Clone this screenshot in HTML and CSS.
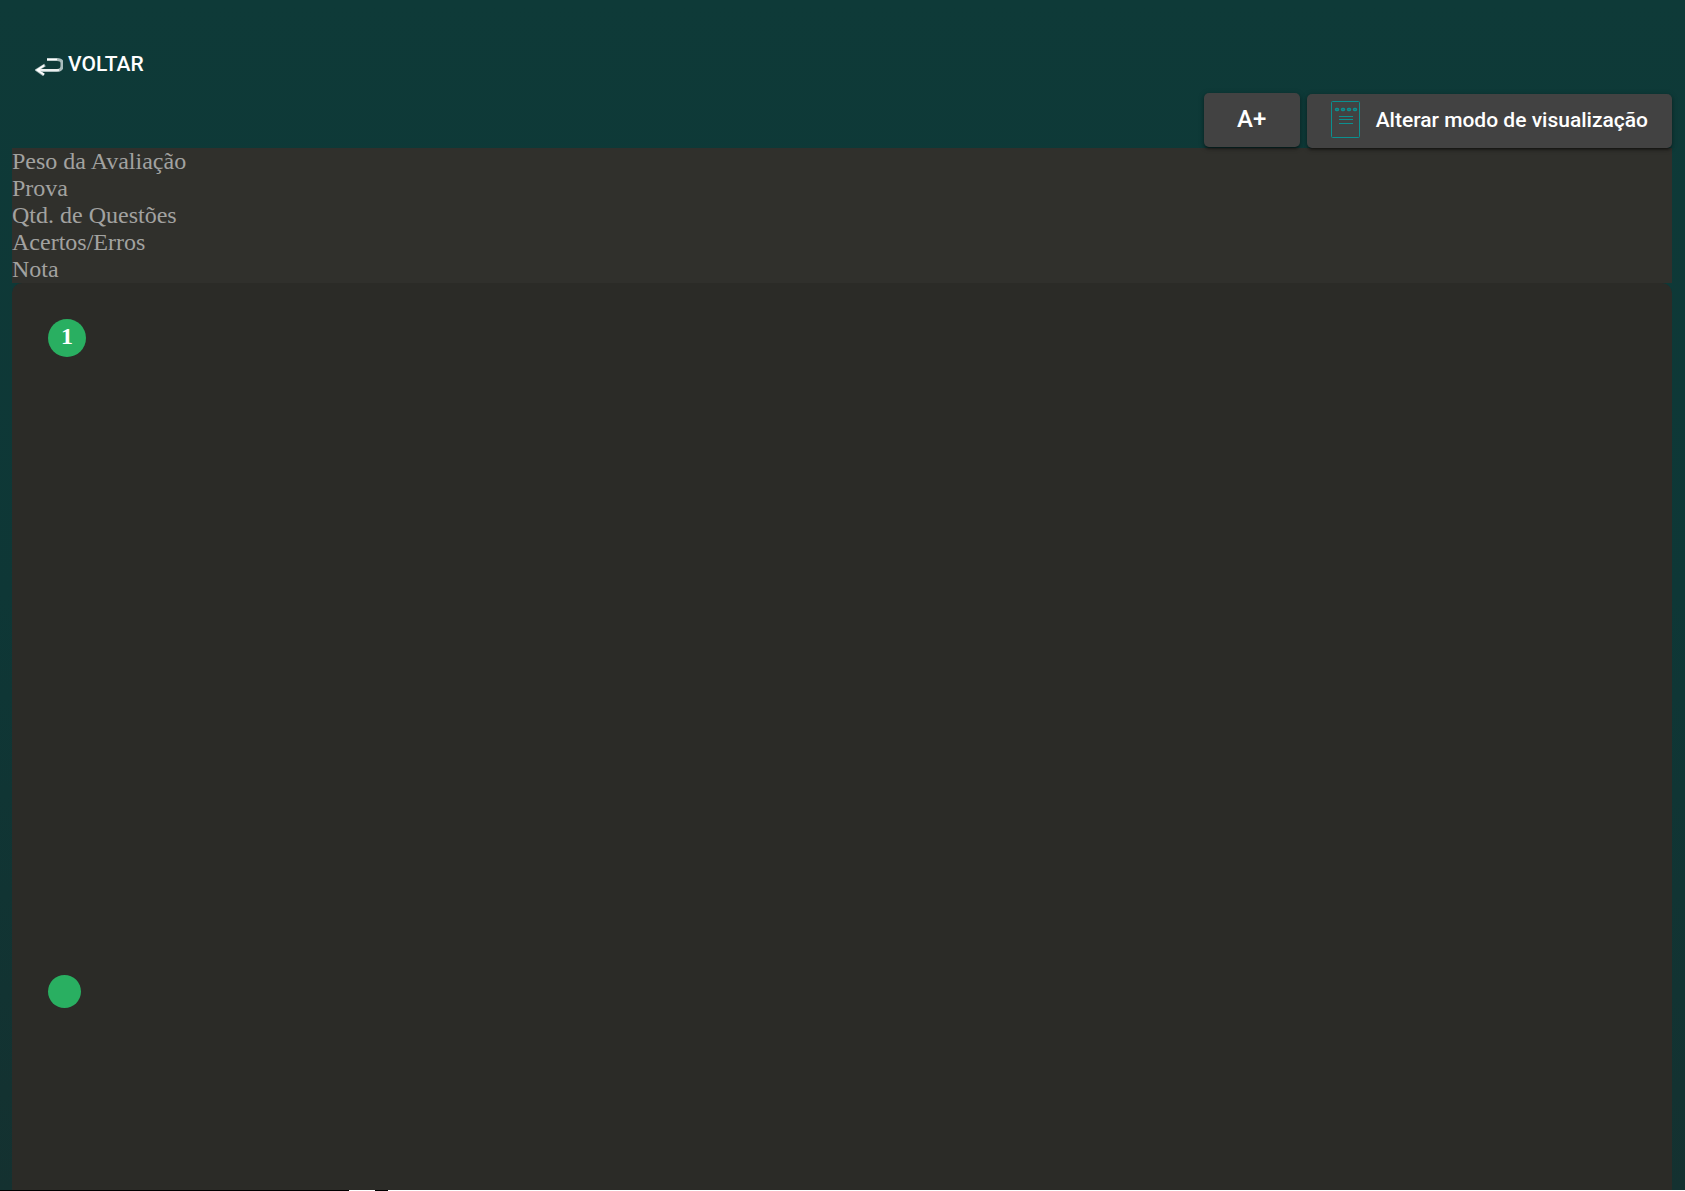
FILE: index.html
```html
<!DOCTYPE html>
<html lang="pt-BR">
<head>
<meta charset="utf-8">
<title>Avaliação</title>
<link rel="stylesheet" href="styles.css">
</head>
<body>
<header class="topbar">
  <button type="button" class="back">
    <svg class="back-icon" viewBox="0 0 28 18" width="28" height="18" fill="none" aria-hidden="true">
      <path d="M12 1.500H22Q27 1.500 27 5V8Q27 12.500 22 12.500H3M10 7L2 12L9 17" stroke="#a9bcbc" stroke-width="3"/>
      <path d="M12 1.500H22M24 12H2M9 7.500L2 12L9 16.500" stroke="#fff" stroke-width="1.500"/>
    </svg>
    <span>VOLTAR</span>
  </button>
</header>
<div class="actions">
  <button type="button" class="raised zoom">A+</button>
  <button type="button" class="raised mode">
    <svg class="mode-icon" viewBox="0 0 30 38" width="30" height="38" fill="none" stroke="#0b9090" aria-hidden="true">
      <rect x=".5" y=".5" width="28" height="36" rx="1"/>
      <g stroke-width="1.500">
        <rect x="4.500" y="7.500" width="3" height="2" rx="1"/>
        <rect x="10.500" y="7.500" width="3" height="2" rx="1"/>
        <rect x="16.500" y="7.500" width="3" height="2" rx="1"/>
        <rect x="22.500" y="7.500" width="3" height="2" rx="1"/>
      </g>
      <path d="M8 15.500H22M8 18.500H22M8 22.500H22"/>
    </svg>
    <span>Alterar modo de visualização</span>
  </button>
</div>
<main class="content">
  <ul class="summary">
    <li>Peso da Avaliação</li>
    <li>Prova</li>
    <li>Qtd. de Questões</li>
    <li>Acertos/Erros</li>
    <li>Nota</li>
  </ul>
  <section class="questions">
    <div class="question"><span class="number">1</span></div>
    <div class="dot"></div>
  </section>
</main>
<footer class="edge"></footer>
</body>
</html>
```
FILE: styles.css
```css
* { box-sizing: border-box; }

body {
  margin: 0;
  min-height: 100vh;
  display: flex;
  flex-direction: column;
  background: linear-gradient(#0e3a38, #0e3736 50%, #143130);
  font-family: "Liberation Serif", serif;
  font-size: 24px;
  line-height: 27px;
}

button {
  border: 0;
  color: #fff;
  font-family: Roboto, sans-serif;
  font-weight: 500;
  font-size: 21px;
  line-height: 24px;
}

.topbar {
  display: flex;
  padding: 52px 35px 17px;
}

.back {
  display: flex;
  align-items: center;
  gap: 5px;
  padding: 0;
  background: none;
}

.back-icon { margin-top: 5px; }

.actions {
  position: relative;
  display: flex;
  justify-content: flex-end;
  gap: 7px;
  height: 55px;
  padding: 0 13px 0 12px;
}

.raised {
  height: 54px;
  padding: 0 24px 2px;
  border-radius: 5px;
  background: #424242;
  box-shadow: 0 3px 2px -2px rgba(0, 0, 0, .3), 0 2px 3px rgba(0, 0, 0, .3), 0 1px 6px rgba(0, 0, 0, .2);
}

.zoom {
  width: 96px;
  font-size: 24px;
}

.mode {
  display: flex;
  align-items: center;
  gap: 15px;
  margin-top: 1px;
}

.content {
  flex: 1;
  display: flex;
  flex-direction: column;
  padding: 0 13px 0 12px;
}

.summary {
  margin: 0;
  padding: 0;
  list-style: none;
  background: #30302c;
  color: #a2a2a0;
}

.questions {
  flex: 1;
  padding: 36px;
  border-radius: 10px 10px 0 0;
  background: #2b2b27;
}

.question { min-height: 656px; }

.number {
  display: block;
  width: 38px;
  height: 38px;
  border-radius: 50%;
  background: #29af61;
  color: #fff;
  font-weight: 700;
  line-height: 35px;
  text-align: center;
}

.dot {
  width: 33px;
  height: 33px;
  border-radius: 50%;
  background: #29af61;
}

.edge {
  height: 1px;
  background: linear-gradient(90deg, #000 349px, #fff 349px 375px, #000 375px 388px, #fff 388px);
}
```
